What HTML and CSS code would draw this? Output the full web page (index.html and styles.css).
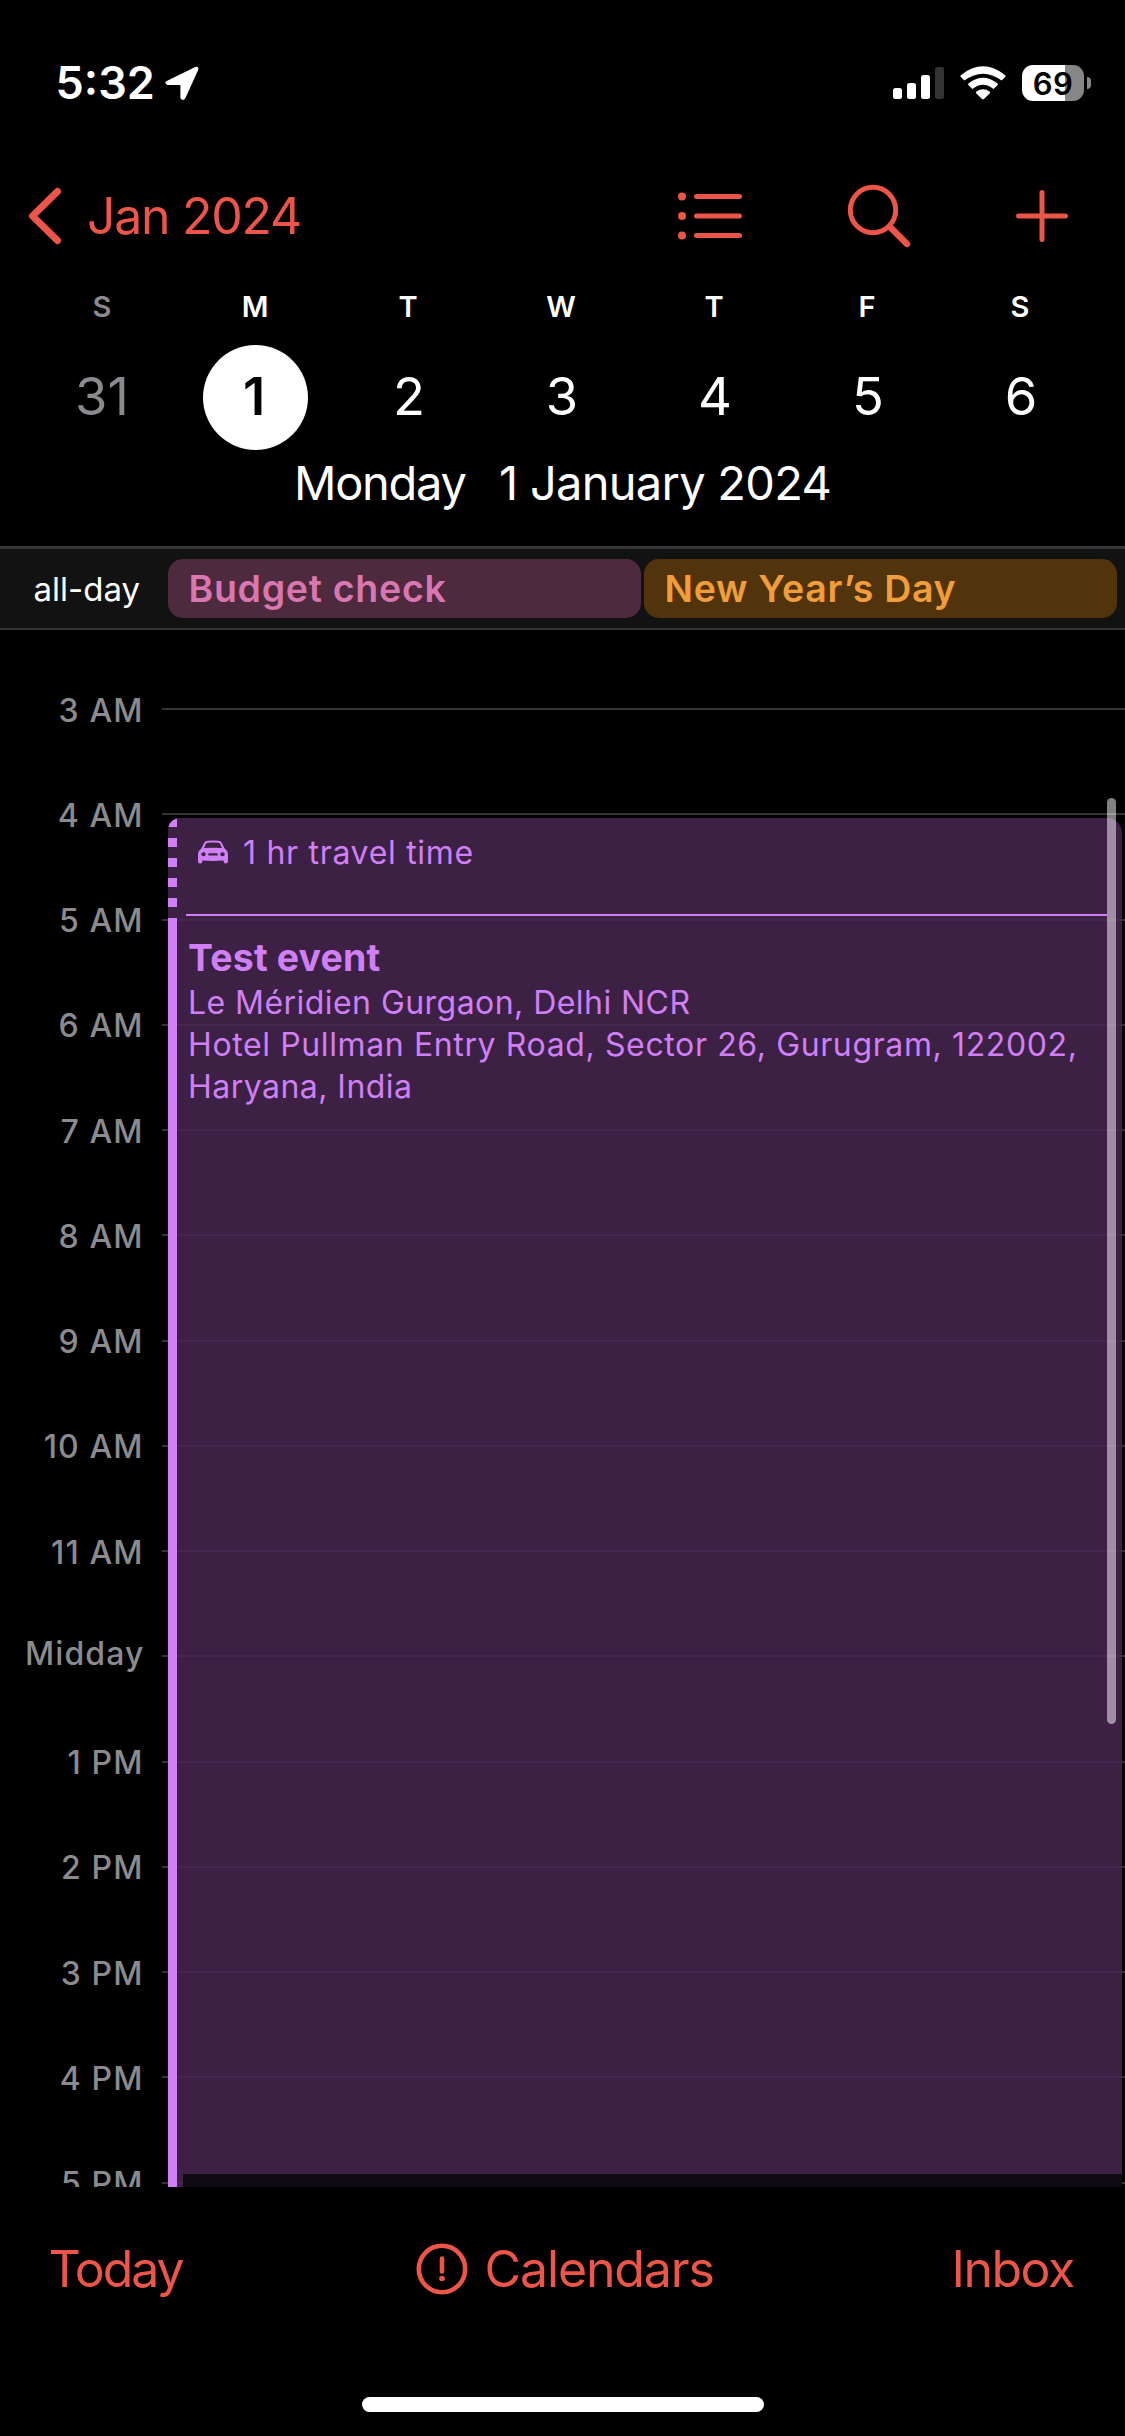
FILE: index.html
```
<!DOCTYPE html>
<html lang="en">
<head>
<meta charset="utf-8">
<title>Calendar</title>
<link rel="stylesheet" href="styles.css">
</head>
<body>
<div class="screen">
  <header class="status">
    <span class="clock">5:32</span>
    <svg class="location" width="36" height="36" viewBox="0 0 36 36"><path d="M3.500 16.200 31.500 2.600Q34.600 1.600 33.600 4.800L20.800 33Q19 35.600 17 33V19.300H3.300Q.4 18 3.500 16.200Z"/></svg>
    <svg class="signal" width="52" height="34" viewBox="0 0 52 34"><rect y="22" width="9" height="11" rx="2.500"/><rect x="14" y="17" width="9" height="16" rx="2.500"/><rect x="28" y="9" width="9" height="24" rx="2.500"/><rect class="dim" x="42" y="1" width="9" height="32" rx="2.500"/></svg>
    <svg class="wifi" width="48" height="34" viewBox="0 0 48 34"><path d="M1.800 9.200Q24-8.500 46.200 9.200Q47 10 46.200 10.900L42.600 14.600Q24 .8 5.400 14.600L1.800 10.900Q1 10 1.800 9.200Z"/><path d="M9.400 17.400Q24 6 38.600 17.400Q39.200 18.200 38.600 19L34.600 23Q24 14.500 13.400 23L9.400 19Q8.800 18.200 9.400 17.400Z"/><path d="M17.400 25.600Q24 20.800 30.600 25.600Q31.600 26.500 30.600 27.500L25 33Q24 33.800 23 33L17.400 27.500Q16.400 26.500 17.400 25.600Z"/></svg>
    <div class="battery"><span>69</span></div>
    <i class="battery-tip"></i>
  </header>

  <nav class="nav">
    <svg class="back" width="36" height="60" viewBox="0 0 36 60"><path d="M30.500 5.500 5.500 30 30.500 54.500"/></svg>
    <span class="month">Jan 2024</span>
    <svg class="list" width="66" height="52" viewBox="0 0 66 52"><path d="M19.500 6.500H62.500M19.500 26H62.500M19.500 45.500H62.500"/><circle cx="5" cy="6.500" r="4"/><circle cx="5" cy="26" r="4"/><circle cx="5" cy="45.500" r="4"/></svg>
    <svg class="search" width="64" height="64" viewBox="0 0 64 64"><circle cx="26" cy="26" r="22.700"/><path d="M43.500 43.500 60 60"/></svg>
    <svg class="plus" width="54" height="54" viewBox="0 0 54 54"><path d="M27 3.500V50.500M3.500 27H50.500"/></svg>
  </nav>

  <div class="weekdays"><span class="muted">S</span><span>M</span><span>T</span><span>W</span><span>T</span><span>F</span><span>S</span></div>
  <div class="dates"><span class="muted">31</span><span class="selected">1</span><span>2</span><span>3</span><span>4</span><span>5</span><span>6</span></div>
  <div class="full-date"><span class="day-name">Monday</span><span>1 January 2024</span></div>

  <section class="all-day">
    <span class="all-day-label">all-day</span>
    <div class="chip pink">Budget check</div>
    <div class="chip orange">New Year’s Day</div>
  </section>

  <main class="timeline">
    <div class="hour"><span>3 AM</span></div>
    <div class="hour"><span>4 AM</span></div>
    <div class="hour"><span>5 AM</span></div>
    <div class="hour"><span>6 AM</span></div>
    <div class="hour"><span>7 AM</span></div>
    <div class="hour"><span>8 AM</span></div>
    <div class="hour"><span>9 AM</span></div>
    <div class="hour"><span>10 AM</span></div>
    <div class="hour"><span>11 AM</span></div>
    <div class="hour midday"><span>Midday</span></div>
    <div class="hour"><span>1 PM</span></div>
    <div class="hour"><span>2 PM</span></div>
    <div class="hour"><span>3 PM</span></div>
    <div class="hour"><span>4 PM</span></div>
    <div class="hour"><span>5 PM</span></div>

    <article class="event">
      <div class="rail"><i class="dashes"></i><i class="solid"></i></div>
      <div class="event-body">
        <div class="travel">
          <svg width="32" height="24" viewBox="0 0 32 26" preserveAspectRatio="none"><path fill-rule="evenodd" d="M4.500 9 7.200 3Q8.200 .8 10.700 .7Q16 .2 21.300 .7Q23.800 .8 24.800 3L27.500 9Q31 12 31 15V23Q31 25.500 28.800 25.500T26.600 23V22.200Q16 23.200 5.400 22.200V23Q5.400 25.500 3.200 25.500T1 23V15Q1 12 4.500 9ZM7 8.800Q16 8 25 8.800L23 4Q22.600 3 21.300 2.900Q16 2.500 10.700 2.900Q9.400 3 9 4ZM6.500 13.300a2.200 2.200 0 1 0 .01 0ZM25.500 13.300a2.200 2.200 0 1 0 .01 0ZM12.500 14.300a1.200 1.200 0 0 0 0 2.600H19.500a1.200 1.200 0 0 0 0-2.600Z"/></svg>
          <span>1 hr travel time</span>
        </div>
        <h2>Test event</h2>
        <p class="place">Le Méridien Gurgaon, Delhi NCR</p>
        <p class="address">Hotel Pullman Entry Road, Sector 26, Gurugram, 122002,</p>
        <p class="region">Haryana, India</p>
      </div>
    </article>
    <div class="next-event"></div>
    <i class="scrollbar"></i>
  </main>

  <footer class="toolbar">
    <span class="today">Today</span>
    <span class="calendars">
      <svg width="52" height="52" viewBox="0 0 52 52"><circle cx="26" cy="26" r="23.200"/><path d="M26 15.500V28.500"/><circle class="dot" cx="26" cy="35.500" r="2.800"/></svg>
      <span>Calendars</span>
    </span>
    <span class="inbox">Inbox</span>
  </footer>
  <div class="home-indicator"></div>
</div>
</body>
</html>
```
FILE: styles.css
```
* { box-sizing: border-box; margin: 0; padding: 0; }

body {
  background: #000;
  color: #fff;
  font-family: Inter, "Liberation Sans", sans-serif;
}

svg { display: block; flex: none; }
i { display: block; }

.screen {
  width: 1125px;
  height: 2436px;
  display: flex;
  flex-direction: column;
  overflow: hidden;
  background: #000;
}
.screen > * { flex: none; }

/* Status bar */
.status { height: 165px; display: flex; align-items: center; padding-left: 55.5px; }
.clock { width: 108.5px; font-size: 45px; font-weight: 600; }
.status svg { fill: #fff; }
.status .location { stroke: #fff; stroke-width: 1.2; stroke-linejoin: round; }
.signal { margin-left: 693px; }
.status .dim { fill: #333; }
.wifi { margin-left: 14px; }
.battery {
  width: 62px;
  height: 36px;
  margin-left: 15px;
  border-radius: 11px;
  background: linear-gradient(90deg, #fff 43px, #868686 43px);
  color: #000;
  font-size: 31px;
  font-weight: 600;
  line-height: 37px;
  letter-spacing: .5px;
  text-align: center;
}
.battery-tip { width: 4px; height: 12px; margin-left: 3px; border-radius: 0 5px 5px 0; background: #868686; }

/* Navigation */
.nav { height: 102px; display: flex; align-items: center; padding-left: 27px; color: #ec5548; }
.nav svg { fill: none; stroke: #ec5548; stroke-width: 5; stroke-linecap: round; }
.nav .back { stroke-width: 7; stroke-linejoin: round; }
.month { width: 300px; margin-left: 24px; font-size: 50px; letter-spacing: -1.28px; white-space: nowrap; }
.nav .list { margin-left: 290px; }
.nav .list circle { fill: #ec5548; stroke: none; }
.nav .search { margin-left: 104px; }
.search path { stroke-width: 6.5; }
.nav .plus { margin-left: 104px; }

/* Week strip */
.weekdays, .dates { display: grid; grid-template-columns: repeat(7, 153px); padding-left: 25.5px; justify-items: center; align-items: center; }
.weekdays { height: 78px; padding-top: 1px; font-size: 29px; font-weight: 600; }
.dates { height: 105px; font-size: 52.5px; }
.dates span { padding: 0 0 4px 2px; }
.dates .muted { padding-left: 0; }
.muted { color: #8a8a8f; }
.dates .selected {
  width: 105px;
  height: 105px;
  padding: 0 2px 0 0;
  border-radius: 50%;
  background: #fff;
  color: #000;
  font-weight: 600;
  line-height: 102px;
  text-align: center;
}
.full-date { height: 96px; display: flex; padding-left: 294px; font-size: 47px; line-height: 66px; letter-spacing: -.72px; }
.day-name { width: 205px; letter-spacing: -1.28px; }

/* All-day row */
.all-day {
  height: 84px;
  display: flex;
  align-items: center;
  border-top: 3px solid #363637;
  border-bottom: 2px solid #363637;
  background: #121212;
}
.all-day-label { width: 168px; padding-left: 33.5px; font-size: 33px; }
.chip {
  width: 473px;
  height: 59px;
  margin-right: 3px;
  padding-left: 20.5px;
  border-radius: 15px;
  font-size: 37.5px;
  font-weight: 600;
  line-height: 60px;
  letter-spacing: .7px;
}
.pink { background: #4e2a3e; color: #da76b0; }
.orange { background: #52340c; color: #f19d3a; }

/* Day timeline */
.timeline { position: relative; height: 1557px; padding-top: 26.4px; overflow: hidden; }
.hour { height: 105.25px; display: flex; align-items: center; color: #8b8b8e; font-size: 32px; font-weight: 500; letter-spacing: 1.1px; }
.hour span { width: 162px; padding: 2px 18.5px 0 0; text-align: right; }
.hour.midday span { padding: 0 17.5px 5px 0; }
.hour::after { content: ""; flex: 1; height: 2px; background: #343436; }

.event {
  position: absolute;
  left: 168px;
  top: 188px;
  width: 954px;
  height: 1380px;
  display: flex;
  border-radius: 12px 15px 0 0;
  overflow: hidden;
  background: rgba(71, 39, 81, .85);
  color: #d07ff5;
}
.rail { width: 9px; display: flex; flex-direction: column; }
.dashes { height: 100px; background: repeating-linear-gradient(#d07ff5 0 9px, transparent 9px 20px); }
.solid { flex: 1; background: #d07ff5; }
.event-body { flex: 1; padding: 0 15px 0 9px; }
.travel { height: 98px; display: flex; align-items: flex-start; gap: 14px; padding: 22px 0 0 11px; border-bottom: 2px solid #d07ff5; }
.travel svg { fill: #d07ff5; }
.travel span { font-size: 32px; line-height: 26px; letter-spacing: .7px; }
.event h2 { padding: 19px 0 0 2px; font-size: 37.5px; font-weight: 700; line-height: 46px; letter-spacing: .15px; }
.event p { padding-left: 2px; font-size: 32px; line-height: 42px; white-space: nowrap; }
.event .place { padding-top: 1px; letter-spacing: .45px; }
.address { letter-spacing: .62px; }
.region { letter-spacing: .46px; }
.next-event { position: absolute; left: 183px; top: 1544px; width: 939px; height: 13px; background: #100a13; }
.scrollbar { position: absolute; left: 1107px; top: 168px; width: 9px; height: 926px; border-radius: 5px; background: rgba(255, 255, 255, .5); }

/* Bottom toolbar */
.toolbar { height: 165px; display: flex; align-items: center; color: #ec5548; font-size: 50px; }
.toolbar span { padding-bottom: 1px; }
.toolbar svg { fill: none; stroke: #ec5548; stroke-width: 4.6; stroke-linecap: round; }
.toolbar .dot { fill: #ec5548; stroke: none; }
.today { width: 366px; padding-left: 48.5px; letter-spacing: -2.08px; }
.calendars { width: 536px; display: flex; align-items: center; gap: 17px; padding-left: 49.5px; letter-spacing: -1.11px; }
.inbox { padding-left: 49.5px; letter-spacing: -1.5px; }
.home-indicator { width: 402px; height: 15px; margin: 45px 0 0 362px; border-radius: 8px; background: #fff; }
```
